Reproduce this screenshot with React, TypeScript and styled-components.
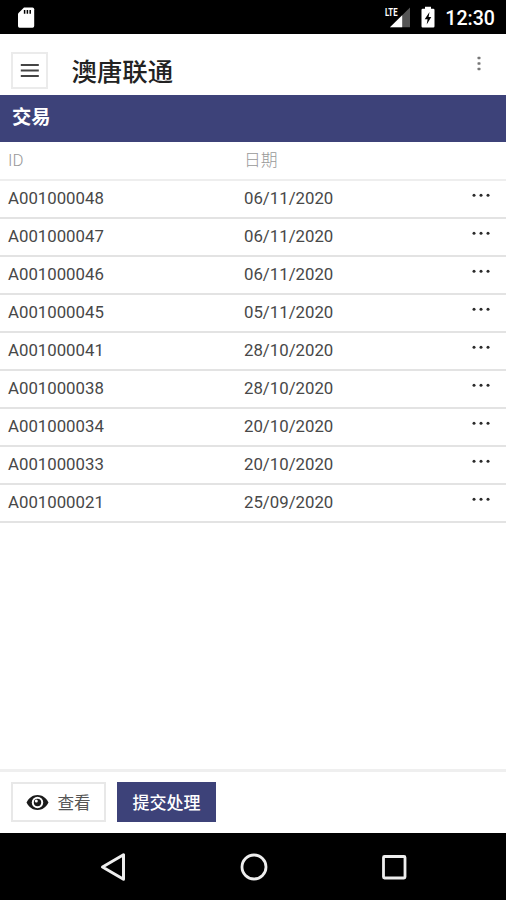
import React from 'react';
import styled, { createGlobalStyle } from 'styled-components';

const GlobalStyle = createGlobalStyle`
  * { box-sizing: border-box; }
  body { margin: 0; background: #fff; }
  button { font: inherit; margin: 0; cursor: pointer; }
  svg { display: block; flex: none; }
`;

const navy = '#3d4279';

const Screen = styled.div`
  display: flex;
  flex-direction: column;
  width: 506px;
  height: 900px;
  background: #fff;
  color: #444;
  font-family: Roboto, 'Noto Sans CJK SC', sans-serif;
  font-size: 17px;
  overflow: hidden;
`;

const StatusBar = styled.header`
  display: flex;
  align-items: center;
  height: 34px;
  padding: 0 11px 0 17px;
  background: #000;
`;

const StatusIcons = styled.div`
  display: flex;
  align-items: center;
  margin-left: auto;
`;

const Clock = styled.time`
  margin-left: 10px;
  padding-top: 3px;
  color: #fff;
  font-size: 19.6px;
  font-weight: 500;
  line-height: 24px;
`;

const AppBar = styled.div`
  display: flex;
  height: 61px;
  padding: 18px 16px 0 11px;
`;

const MenuButton = styled.button`
  display: flex;
  align-items: center;
  justify-content: center;
  width: 37px;
  height: 37px;
  padding: 0;
  border: 2px solid #ebebeb;
  background: #fff;
`;

const AppTitle = styled.h1`
  margin: 2px 0 0 23.5px;
  color: #222;
  font-size: 25.4px;
  font-weight: 500;
  line-height: 37px;
`;

const OverflowButton = styled.button`
  display: flex;
  justify-content: center;
  width: 22px;
  height: 24px;
  margin-left: auto;
  padding: 4px 0 0;
  border: 0;
  background: none;
`;

const SectionTitle = styled.h2`
  height: 47px;
  margin: 0;
  padding: 0 12px;
  background: ${navy};
  color: #fff;
  font-size: 19.3px;
  font-weight: 700;
  line-height: 46px;
`;

const Row = styled.div<{ $head?: boolean }>`
  display: grid;
  grid-template-columns: 236px 1fr 34px;
  align-items: center;
  height: ${p => (p.$head ? 39 : 38)}px;
  padding: 0 8px;
  border-bottom: 2px solid ${p => (p.$head ? '#eeeeee' : '#e3e3e3')};
  color: ${p => (p.$head ? '#999' : '#484848')};
  font-weight: ${p => (p.$head ? 300 : 400)};
  font-size: 16.8px;
  line-height: 20px;
`;

const Cell = styled.span`
  padding-bottom: 2px;
  white-space: nowrap;
`;

const RowMenu = styled.button`
  display: flex;
  justify-content: center;
  height: 34px;
  padding: 11px 1px 0 1px;
  border: 0;
  background: none;
`;

const Table = styled.main`
  flex: 1;
`;

const ActionBar = styled.footer`
  display: flex;
  gap: 11px;
  height: 64px;
  padding: 10px 11px 0;
  border-top: 3px solid #efefef;
`;

const ActionButton = styled.button<{ $primary?: boolean }>`
  display: flex;
  align-items: center;
  justify-content: center;
  gap: 8px;
  width: ${p => (p.$primary ? 99 : 95)}px;
  height: 40px;
  padding: ${p => (p.$primary ? '2px' : '1px')} 0 0;
  border: ${p => (p.$primary ? `1px solid ${navy}` : '2px solid #e8e8e8')};
  background: ${p => (p.$primary ? navy : '#fff')};
  color: ${p => (p.$primary ? '#fff' : '#555')};
  font-size: ${p => (p.$primary ? 17 : 16.6)}px;
  font-weight: ${p => (p.$primary ? 500 : 400)};
  line-height: 24px;
`;

const ButtonLabel = styled.span`
  padding-top: 3px;
`;

const NavBar = styled.nav`
  display: flex;
  align-items: center;
  justify-content: space-between;
  height: 67px;
  padding: 0 97px 0 98px;
  background: #000;
`;

const SdCardIcon = () => (
  <svg width="18" height="21" viewBox="0 0 18 21">
    <path d="M7 0.5H15.5Q17.2 0.5 17.2 2.2V19Q17.2 20.7 15.5 20.7H2.5Q1 20.7 1 19V6.5Z" fill="#fff" />
    <path d="M7.6 3V6.8M10.4 3V6.8M13.2 3V6.8" stroke="#000" strokeWidth="1.5" />
  </svg>
);

const LteText = styled.text`
  font-family: Roboto, sans-serif;
  font-size: 11.5px;
  font-weight: 700;
`;

const SignalIcon = () => (
  <svg width="27" height="22" viewBox="0 0 27 22">
    <path d="M26 1.5V21.3H6Z" fill="#555" />
    <path d="M18.2 9.3V21.3H6Z" fill="#fff" />
    <LteText x="1" y="10" fill="#fff" textLength="12.5" lengthAdjust="spacingAndGlyphs">LTE</LteText>
  </svg>
);

const BatteryWrap = styled.span`
  margin-left: 10px;
`;

const BatteryIcon = () => (
  <svg width="14" height="22" viewBox="0 0 14 22">
    <path d="M4 0.7H10V2.7H12.3Q13.5 2.7 13.5 3.9V20.3Q13.5 21.6 12.3 21.6H1.7Q0.5 21.6 0.5 20.3V3.9Q0.5 2.7 1.7 2.7H4Z" fill="#fff" />
    <path d="M8.5 6L3.7 13.2H6.6L5.7 18.4L10.3 11H7.6Z" fill="#000" />
  </svg>
);

const EyeIcon = () => (
  <svg width="23" height="17" viewBox="0 0 23 17">
    <path d="M0.5 8.5C3 3.7 6.8 1 11.5 1S20 3.7 22.5 8.5C20 13.3 16.2 16 11.5 16S3 13.3 0.5 8.5Z" fill="#1b1b1b" />
    <circle cx="11.5" cy="8.5" r="5.7" fill="#fff" />
    <circle cx="11.5" cy="8.5" r="3.7" fill="#1b1b1b" />
    <circle cx="10.3" cy="7" r="1.5" fill="#fff" />
  </svg>
);

const transactions = [
  { id: 'A001000048', date: '06/11/2020' },
  { id: 'A001000047', date: '06/11/2020' },
  { id: 'A001000046', date: '06/11/2020' },
  { id: 'A001000045', date: '05/11/2020' },
  { id: 'A001000041', date: '28/10/2020' },
  { id: 'A001000038', date: '28/10/2020' },
  { id: 'A001000034', date: '20/10/2020' },
  { id: 'A001000033', date: '20/10/2020' },
  { id: 'A001000021', date: '25/09/2020' },
];

export default function App() {
  return (
    <Screen lang="zh-CN">
      <GlobalStyle />
      <StatusBar>
        <SdCardIcon />
        <StatusIcons>
          <SignalIcon />
          <BatteryWrap><BatteryIcon /></BatteryWrap>
          <Clock>12:30</Clock>
        </StatusIcons>
      </StatusBar>
      <AppBar>
        <MenuButton aria-label="菜单">
          <svg width="19" height="15" viewBox="0 0 19 15">
            <path d="M0.8 2H18.8M0.8 7.5H18.8M0.8 13H18.8" stroke="#444" strokeWidth="2.2" />
          </svg>
        </MenuButton>
        <AppTitle>澳唐联通</AppTitle>
        <OverflowButton aria-label="更多">
          <svg width="4" height="15" viewBox="0 0 4 15" fill="#777">
            <rect x="0.5" y="0.8" width="3" height="2.4" rx="0.6" />
            <rect x="0.5" y="6.3" width="3" height="2.4" rx="0.6" />
            <rect x="0.5" y="11.8" width="3" height="2.4" rx="0.6" />
          </svg>
        </OverflowButton>
      </AppBar>
      <SectionTitle>交易</SectionTitle>
      <Table>
        <Row $head>
          <Cell>ID</Cell>
          <Cell>日期</Cell>
        </Row>
        {transactions.map(t => (
          <Row key={t.id}>
            <Cell>{t.id}</Cell>
            <Cell>{t.date}</Cell>
            <RowMenu aria-label="操作">
              <svg width="18" height="4" viewBox="0 0 18 4" fill="#2a2a2a">
                <circle cx="2" cy="2.2" r="1.5" />
                <circle cx="9" cy="2.2" r="1.5" />
                <circle cx="16" cy="2.2" r="1.5" />
              </svg>
            </RowMenu>
          </Row>
        ))}
      </Table>
      <ActionBar>
        <ActionButton><EyeIcon /><ButtonLabel>查看</ButtonLabel></ActionButton>
        <ActionButton $primary>提交处理</ActionButton>
      </ActionBar>
      <NavBar>
        <svg width="30" height="30" viewBox="0 0 30 30" fill="none">
          <path d="M25.5 2.8V27.2L4.5 15Z" stroke="#eee" strokeWidth="3" strokeLinejoin="round" />
        </svg>
        <svg width="30" height="30" viewBox="0 0 30 30" fill="none">
          <circle cx="15" cy="15" r="12" stroke="#eee" strokeWidth="2.8" />
        </svg>
        <svg width="30" height="30" viewBox="0 0 30 30" fill="none">
          <rect x="4.5" y="4.5" width="21.5" height="21.5" rx="1" stroke="#eee" strokeWidth="2.8" />
        </svg>
      </NavBar>
    </Screen>
  );
}
